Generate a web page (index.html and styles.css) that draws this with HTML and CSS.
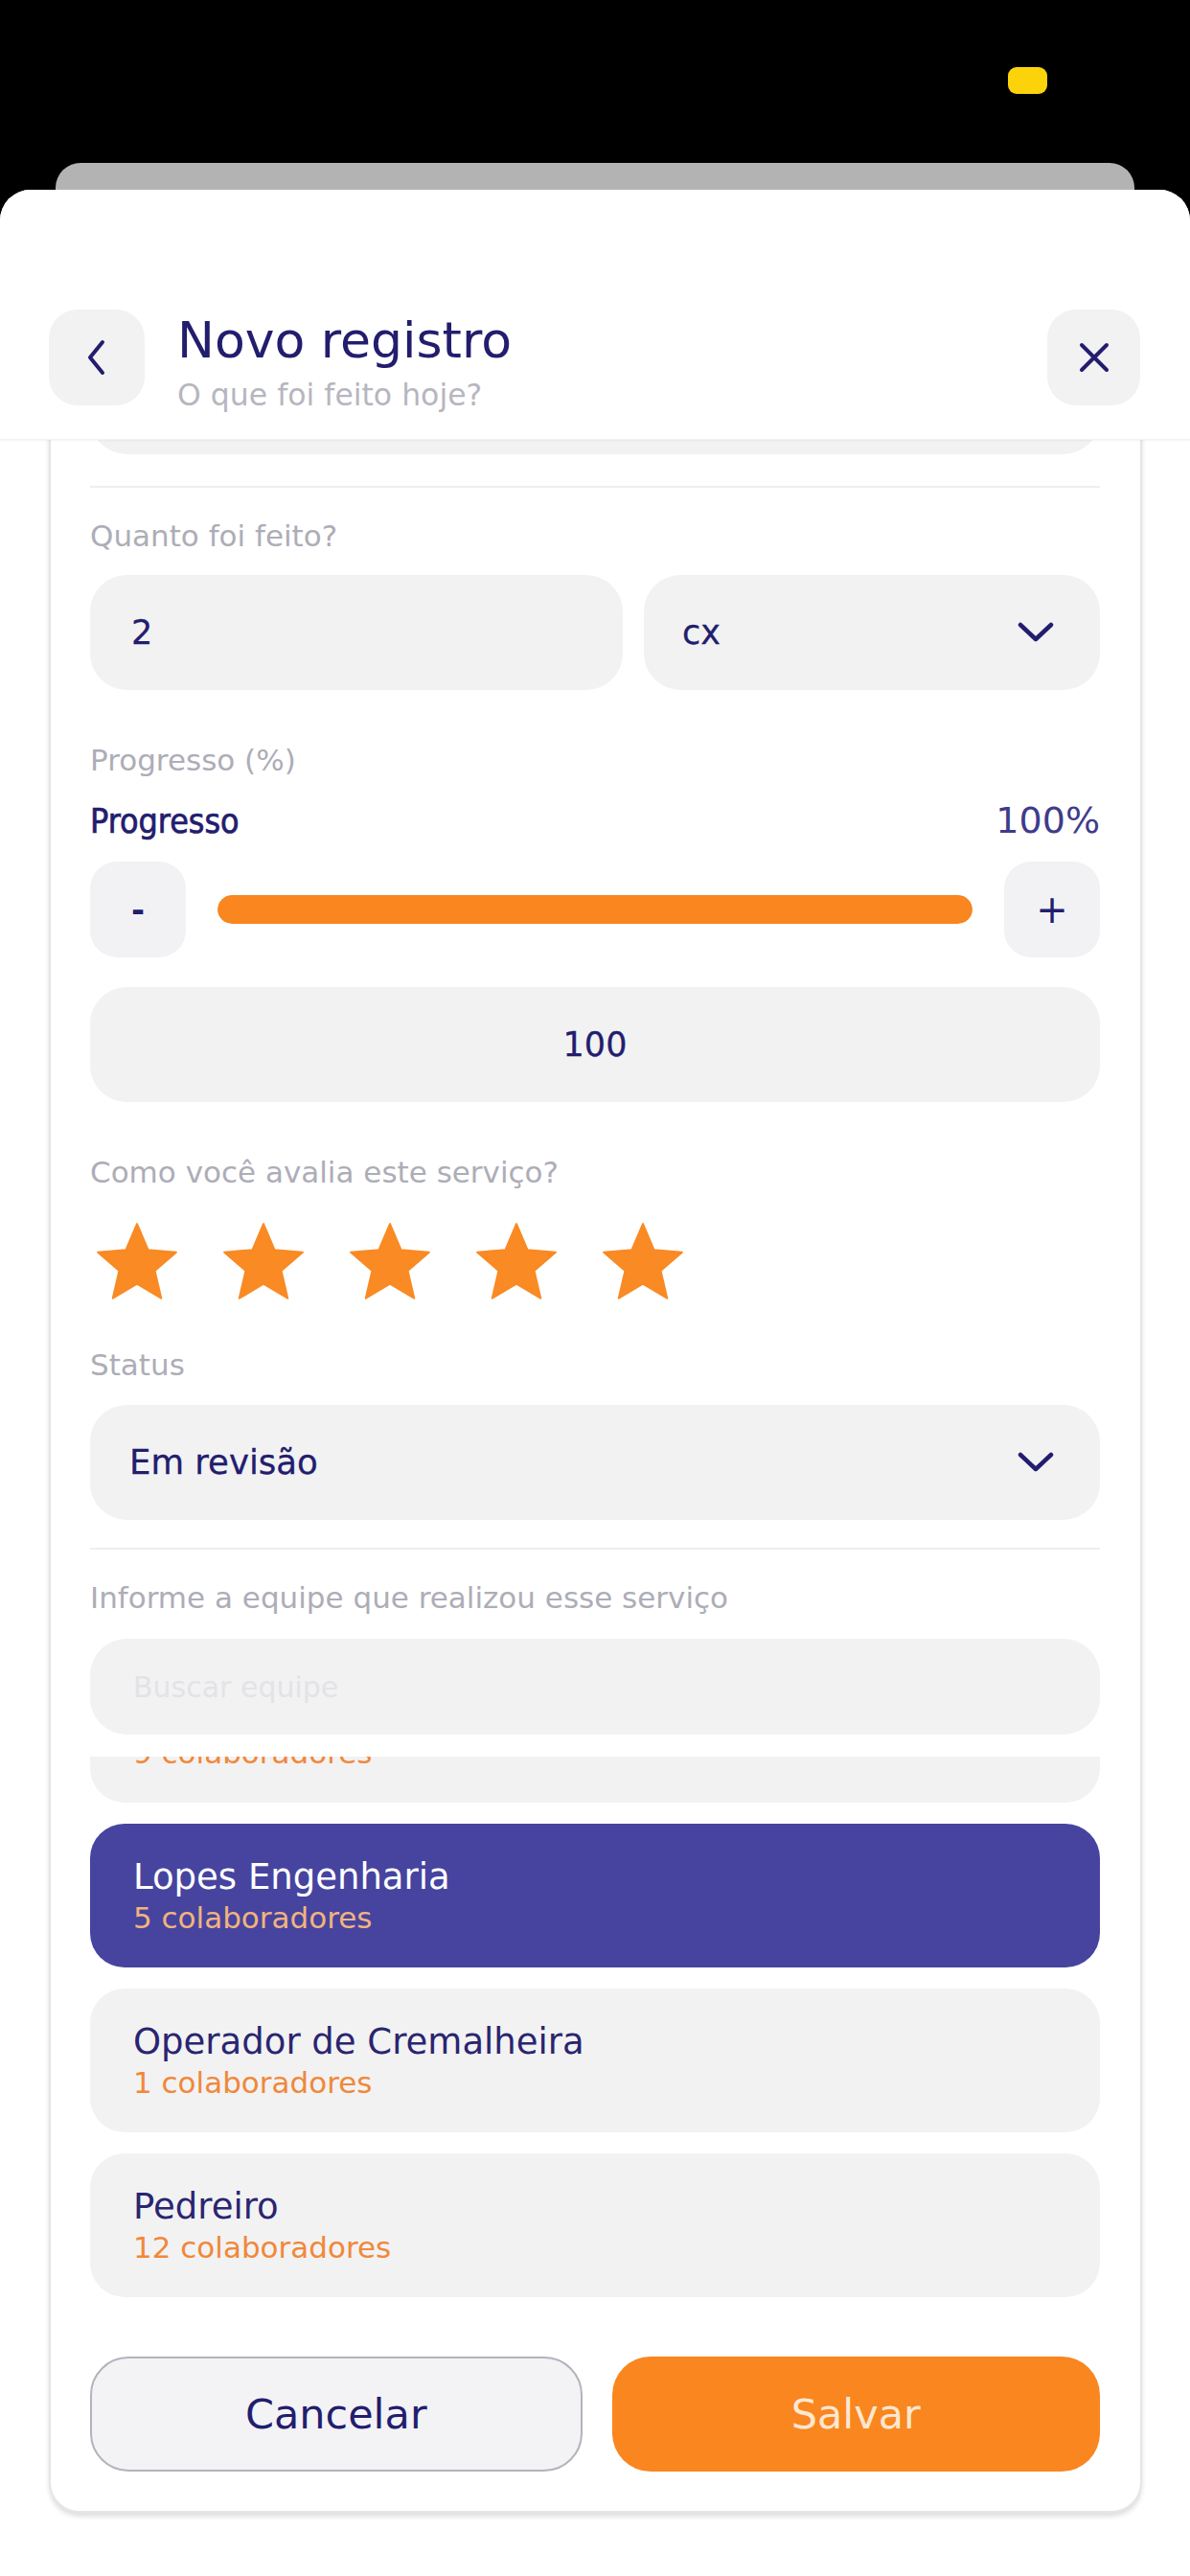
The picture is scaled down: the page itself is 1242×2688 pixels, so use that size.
FILE: index.html
```html
<!DOCTYPE html>
<html lang="pt-BR">
<head>
<meta charset="utf-8">
<title>Novo registro</title>
<link rel="stylesheet" href="styles.css">
</head>
<body>
<div class="statusbar"><span class="pill"></span></div>
<div class="backcard"></div>
<div class="sheet">
  <header class="header">
    <button class="icon-btn" aria-label="Voltar">
      <svg width="24" height="38" viewBox="0 0 24 38"><path d="M18 3 L5 19 L18 35" fill="none" stroke="#231d6e" stroke-width="4" stroke-linecap="round" stroke-linejoin="round"/></svg>
    </button>
    <div class="titles">
      <div class="title">Novo registro</div>
      <div class="subtitle">O que foi feito hoje?</div>
    </div>
    <button class="icon-btn close" aria-label="Fechar">
      <svg width="32" height="32" viewBox="0 0 32 32"><path d="M3 3 L29 29 M29 3 L3 29" fill="none" stroke="#231d6e" stroke-width="4" stroke-linecap="round"/></svg>
    </button>
  </header>
  <div class="scroll">
    <div class="card">
      <div class="field ghost"></div>
      <div class="divider d1"></div>
      <div class="label l1">Quanto foi feito?</div>
      <div class="row qty">
        <div class="field half"><span class="val">2</span></div>
        <div class="field half select"><span class="val">cx</span>
          <svg class="chev" width="38" height="22" viewBox="0 0 38 22"><path d="M3 3 L19 18 L35 3" fill="none" stroke="#231d6e" stroke-width="4.5" stroke-linecap="round" stroke-linejoin="round"/></svg>
        </div>
      </div>
      <div class="label l2">Progresso (%)</div>
      <div class="prog-head">
        <span class="prog-name">Progresso</span>
        <span class="prog-val">100%</span>
      </div>
      <div class="slider-row">
        <button class="step">-</button>
        <div class="track"><div class="fill" style="width:100%"></div></div>
        <button class="step plus">+</button>
      </div>
      <div class="field number"><span class="val">100</span></div>
      <div class="label l3">Como você avalia este serviço?</div>
      <div class="stars">
        <svg class="star" viewBox="0 0 24 24"><path d="M12 17.27L18.18 21l-1.64-7.03L22 9.24l-7.19-.61L12 2 9.19 8.63 2 9.24l5.46 4.73L5.82 21z"/></svg>
        <svg class="star" viewBox="0 0 24 24"><path d="M12 17.27L18.18 21l-1.64-7.03L22 9.24l-7.19-.61L12 2 9.19 8.63 2 9.24l5.46 4.73L5.82 21z"/></svg>
        <svg class="star" viewBox="0 0 24 24"><path d="M12 17.27L18.18 21l-1.64-7.03L22 9.24l-7.19-.61L12 2 9.19 8.63 2 9.24l5.46 4.73L5.82 21z"/></svg>
        <svg class="star" viewBox="0 0 24 24"><path d="M12 17.27L18.18 21l-1.64-7.03L22 9.24l-7.19-.61L12 2 9.19 8.63 2 9.24l5.46 4.73L5.82 21z"/></svg>
        <svg class="star" viewBox="0 0 24 24"><path d="M12 17.27L18.18 21l-1.64-7.03L22 9.24l-7.19-.61L12 2 9.19 8.63 2 9.24l5.46 4.73L5.82 21z"/></svg>
      </div>
      <div class="label l4">Status</div>
      <div class="field select status"><span class="val">Em revisão</span>
        <svg class="chev" width="38" height="22" viewBox="0 0 38 22"><path d="M3 3 L19 18 L35 3" fill="none" stroke="#231d6e" stroke-width="4.5" stroke-linecap="round" stroke-linejoin="round"/></svg>
      </div>
      <div class="divider d2"></div>
      <div class="label l5">Informe a equipe que realizou esse serviço</div>
      <div class="field search"><span class="placeholder">Buscar equipe</span></div>
      <div class="list">
        <div class="list-inner">
          <div class="item"><div class="item-name empty"></div><div class="item-sub">9 colaboradores</div></div>
          <div class="item selected"><div class="item-name">Lopes Engenharia</div><div class="item-sub">5 colaboradores</div></div>
          <div class="item"><div class="item-name">Operador de Cremalheira</div><div class="item-sub">1 colaboradores</div></div>
          <div class="item"><div class="item-name">Pedreiro</div><div class="item-sub">12 colaboradores</div></div>
        </div>
      </div>
      <div class="actions">
        <button class="btn cancel">Cancelar</button>
        <button class="btn save">Salvar</button>
      </div>
    </div>
  </div>
</div>
</body>
</html>
```
FILE: styles.css
```css
* { box-sizing: border-box; }
html, body { margin: 0; padding: 0; }
body {
  width: 1242px;
  height: 2688px;
  overflow: hidden;
  background: #000;
  font-family: "DejaVu Sans", Verdana, sans-serif;
  color: #231d6e;
}
button { font-family: inherit; border: none; padding: 0; margin: 0; cursor: pointer; }

.statusbar {
  height: 170px;
  display: flex;
  justify-content: flex-end;
  align-items: flex-start;
  padding: 70px 149px 0 0;
}
.pill {
  width: 41px;
  height: 28px;
  border-radius: 9px;
  background: #fcd20a;
}
.backcard {
  height: 28px;
  margin: 0 58px;
  background: #b3b3b3;
  border-radius: 26px 26px 0 0;
}
.sheet {
  height: 2490px;
  background: #fff;
  border-radius: 32px 32px 0 0;
  display: flex;
  flex-direction: column;
  overflow: hidden;
}
.header {
  flex: none;
  height: 261px;
  display: flex;
  align-items: center;
  padding: 90px 52px 0 51px;
  box-shadow: 0 1px 2px rgba(0,0,0,0.05);
  border-bottom: 1px solid #f3f3f5;
  position: relative;
  z-index: 1;
  background: #fff;
}
.icon-btn {
  width: 100px;
  height: 100px;
  border-radius: 30px;
  background: #f2f2f3;
  display: flex;
  align-items: center;
  justify-content: center;
  flex: none;
}
.icon-btn.close { width: 97px; margin-left: auto; }
.titles {
  margin-left: 34px;
  padding-top: 10px;
  display: flex;
  flex-direction: column;
  gap: 8px;
}
.title { font-size: 52px; line-height: 60px; color: #231d6e; white-space: nowrap; }
.subtitle { font-size: 31.5px; line-height: 38px; color: #b6b6bf; white-space: nowrap; }

.scroll {
  flex: 1;
  overflow: hidden;
  padding: 0 50px 0 51px;
}
.card {
  margin-top: -147px;
  border: 2px solid #e6e6ea;
  border-radius: 32px;
  padding: 40px 42px 41px 41px;
  background: #fff;
  box-shadow: 0 4px 5px rgba(0,0,0,0.13);
  display: flex;
  flex-direction: column;
}
.field {
  height: 120px;
  border-radius: 38px;
  background: #f2f2f3;
  display: flex;
  align-items: center;
  padding: 0 43px;
}
.val {
  font-size: 35px;
  line-height: 42px;
  color: #231d6e;
  -webkit-text-stroke: 0.3px #231d6e;
}
.select { justify-content: space-between; padding-right: 48px; }
.divider { height: 2px; background: #eeeef0; }
.d1 { margin-top: 33px; }
.d2 { margin-top: 29px; }
.label { font-size: 31px; line-height: 36px; color: #adadb7; white-space: nowrap; }
.l1 { margin-top: 32px; }
.l2 { margin-top: 55px; }
.l3 { margin-top: 55px; }
.l4 { margin-top: 39px; }
.l5 { margin-top: 32px; }
.row.qty { margin-top: 23px; display: flex; gap: 22px; }
.half { flex: 1; }
.half.select { flex: 0 0 476px; padding-left: 40px; }

.prog-head {
  margin-top: 23px;
  height: 44px;
  display: flex;
  justify-content: space-between;
  align-items: center;
}
.prog-name {
  font-family: "DejaVu Sans Condensed", "DejaVu Sans", sans-serif;
  font-stretch: condensed;
  font-size: 35.5px;
  color: #231d6e;
  -webkit-text-stroke: 0.7px #231d6e;
}
.prog-val { font-size: 38px; color: #3f3b8c; }
.slider-row {
  margin-top: 21px;
  height: 100px;
  display: flex;
  align-items: center;
}
.step {
  width: 100px;
  height: 100px;
  border-radius: 28px;
  background: #f2f2f4;
  color: #231d6e;
  font-size: 34px;
  font-weight: bold;
  display: flex;
  align-items: center;
  justify-content: center;
  flex: none;
}
.step.plus { font-size: 40px; font-weight: normal; }
.track {
  flex: 1;
  margin: 0 33px;
  height: 30px;
  border-radius: 15px;
  background: #eeeef0;
  overflow: hidden;
}
.fill { height: 100%; background: #f9861f; border-radius: 15px; }
.number { margin-top: 31px; justify-content: center; }

.stars { margin-top: 28px; display: flex; gap: 34px; }
.star { width: 98px; height: 98px; display: block; }
.star path { fill: #f98a24; stroke: #f98a24; stroke-width: 0.5; stroke-linejoin: round; }

.status { margin-top: 24px; padding-left: 41px; }
.status .val { font-size: 35.5px; }

.search { margin-top: 25px; height: 100px; padding-left: 45px; }
.placeholder { font-size: 30px; color: #e3e3e6; }

.list { margin-top: 23px; height: 564px; overflow: hidden; }
.list-inner { margin-top: -102px; display: flex; flex-direction: column; gap: 22px; }
.item {
  height: 150px;
  border-radius: 36px;
  background: #f2f2f3;
  display: flex;
  flex-direction: column;
  justify-content: center;
  padding: 0 45px;
}
.item-name { font-size: 37px; line-height: 44px; color: #2a2570; }
.item-name.empty { height: 44px; }
.item-sub { font-size: 31px; line-height: 37px; margin-top: 2px; color: #f0883a; }
.item.selected { background: #46449f; }
.item.selected .item-name { color: #fff; }
.item.selected .item-sub { color: #f2b37e; }

.actions { margin-top: 62px; display: flex; gap: 31px; }
.btn {
  flex: 1;
  height: 120px;
  border-radius: 40px;
  font-size: 43px;
  display: flex;
  align-items: center;
  justify-content: center;
}
.cancel { background: #f3f3f6; border: 2px solid #b3b3bc; color: #231d6e; }
.save { background: #f9861f; color: #fde7cf; }
```
